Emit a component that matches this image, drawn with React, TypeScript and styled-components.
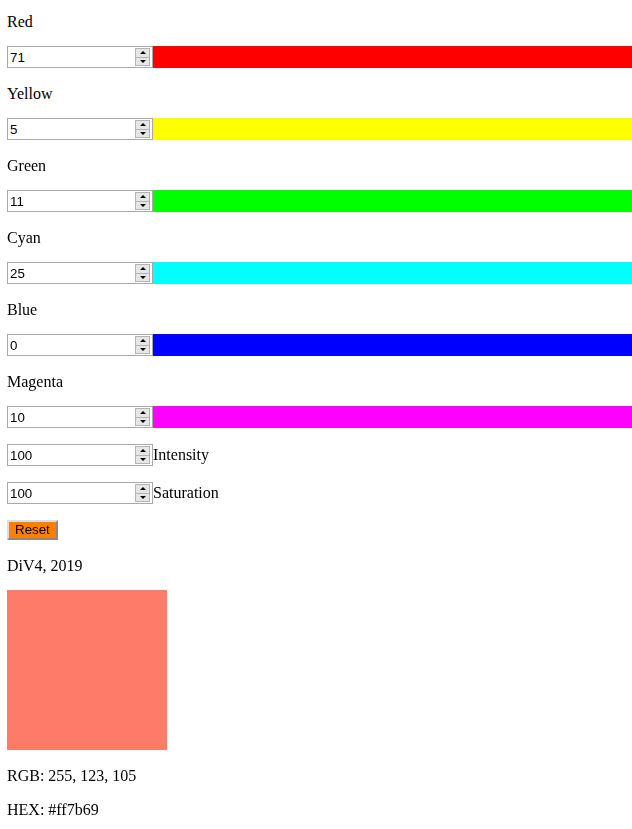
import React, { useState } from "react";
import styled, { createGlobalStyle } from "styled-components";

const Global = createGlobalStyle`
  html, body { margin: 0; padding: 0; background: #ffffff; }
  body { font-family: "Liberation Serif", "Times New Roman", serif; font-size: 16px; color: #000; }
`;

const Page = styled.div`
  padding: 12px 0 0 7px;
  display: flex;
  flex-direction: column;
  align-items: flex-start;
`;

const Label = styled.p`
  margin: 0 0 14px;
  line-height: 20px;
  height: 20px;
  padding-top: 0;
`;

const Row = styled.div`
  display: flex;
  align-items: center;
  align-self: stretch;
  height: 22px;
  margin-bottom: 16px;
`;

const Field = styled.div`
  box-sizing: border-box;
  width: 146px;
  height: 22px;
  flex: none;
  display: flex;
  align-items: center;
  border: 1px solid #a9a9a9;
  background: #fff;
`;

const NumInput = styled.input`
  flex: 1;
  min-width: 0;
  border: none;
  outline: none;
  padding: 0 2px;
  height: 20px;
  font-family: "Liberation Sans", Arial, sans-serif;
  font-size: 13.33px;
  color: #000;
  background: transparent;
  -moz-appearance: textfield;
  &::-webkit-outer-spin-button,
  &::-webkit-inner-spin-button {
    -webkit-appearance: none;
    margin: 0;
  }
`;

const Spinner = styled.div`
  width: 15px;
  height: 18px;
  margin-right: 2px;
  display: flex;
  flex-direction: column;
  flex: none;
`;

const SpinHalf = styled.button`
  box-sizing: border-box;
  flex: 1;
  padding: 0;
  margin: 0;
  border: 1px solid #b4b4b4;
  background: #e6e6e6;
  display: flex;
  align-items: center;
  justify-content: center;
  cursor: default;
  & + & { border-top: none; }
`;

const Arrow = styled.span<{ $up?: boolean }>`
  width: 0;
  height: 0;
  border-left: 3px solid transparent;
  border-right: 3px solid transparent;
  ${(p) => (p.$up ? "border-bottom: 3px solid #000;" : "border-top: 3px solid #000;")}
`;

const Bar = styled.div<{ $color: string }>`
  flex: 1;
  height: 22px;
  background: ${(p) => p.$color};
`;

const Side = styled.span`
  line-height: 18px;
`;

const ResetButton = styled.button`
  box-sizing: border-box;
  height: 20px;
  padding: 0 6px;
  margin: 0 0 16px;
  background: #ff8000;
  border: 2px outset #dddddd;
  font-family: "Liberation Sans", Arial, sans-serif;
  font-size: 13.33px;
  color: #000;
  line-height: 14px;
`;

const Swatch = styled.div<{ $color: string }>`
  width: 160px;
  height: 160px;
  background: ${(p) => p.$color};
  margin-bottom: 16px;
`;

const Info = styled.p`
  margin: 0 0 14px;
  line-height: 20px;
`;

type NumberFieldProps = {
  value: number;
  onChange: (v: number) => void;
  autoFocus?: boolean;
};

function NumberField({ value, onChange, autoFocus }: NumberFieldProps) {
  return (
    <Field>
      <NumInput
        type="number"
        value={value}
        autoFocus={autoFocus}
        onChange={(e) => onChange(Number(e.target.value))}
      />
      <Spinner>
        <SpinHalf type="button" tabIndex={-1} onClick={() => onChange(value + 1)}>
          <Arrow $up />
        </SpinHalf>
        <SpinHalf type="button" tabIndex={-1} onClick={() => onChange(value - 1)}>
          <Arrow />
        </SpinHalf>
      </Spinner>
    </Field>
  );
}

const channels = [
  { name: "Red", color: "#ff0000", init: 71 },
  { name: "Yellow", color: "#ffff00", init: 5 },
  { name: "Green", color: "#00ff00", init: 11 },
  { name: "Cyan", color: "#00ffff", init: 25 },
  { name: "Blue", color: "#0000ff", init: 0 },
  { name: "Magenta", color: "#ff00ff", init: 10 },
];

export default function App() {
  const [values, setValues] = useState<number[]>(channels.map((c) => c.init));
  const [intensity, setIntensity] = useState(100);
  const [saturation, setSaturation] = useState(100);

  const setAt = (i: number, v: number) =>
    setValues((prev) => prev.map((x, j) => (j === i ? v : x)));

  const reset = () => {
    setValues(channels.map((c) => c.init));
    setIntensity(100);
    setSaturation(100);
  };

  return (
    <>
      <Global />
      <Page>
        {channels.map((c, i) => (
          <React.Fragment key={c.name}>
            <Label>{c.name}</Label>
            <Row>
              <NumberField value={values[i]} onChange={(v) => setAt(i, v)} autoFocus={i === 1} />
              <Bar $color={c.color} />
            </Row>
          </React.Fragment>
        ))}
        <Row>
          <NumberField value={intensity} onChange={setIntensity} />
          <Side>Intensity</Side>
        </Row>
        <Row>
          <NumberField value={saturation} onChange={setSaturation} />
          <Side>Saturation</Side>
        </Row>
        <ResetButton type="button" onClick={reset}>Reset</ResetButton>
        <Info>DiV4, 2019</Info>
        <Swatch $color="#ff7b69" />
        <Info>RGB: 255, 123, 105</Info>
        <Info>HEX: #ff7b69</Info>
      </Page>
    </>
  );
}
